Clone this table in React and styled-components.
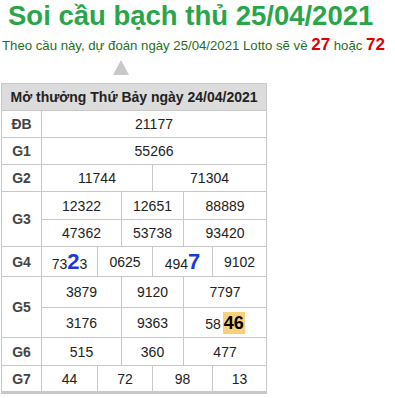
import React from "react";
import styled, { createGlobalStyle } from "styled-components";

const Global = createGlobalStyle`
  html, body { margin: 0; padding: 0; background: #fff; }
  body { font-family: Arial, "Liberation Sans", sans-serif; }
`;

const Page = styled.div`
  width: 395px;
  height: 398px;
  overflow: hidden;
`;

const Title = styled.h1`
  margin: 0;
  padding: 0 0 0 8px;
  font-size: 27.5px;
  line-height: 32px;
  font-weight: bold;
  color: #2aa54a;
  white-space: nowrap;
`;

const Sub = styled.p`
  margin: 3px 0 0 2px;
  font-size: 13.2px;
  line-height: 20px;
  color: #1f6f1f;
  white-space: nowrap;
`;

const Lotto = styled.b`
  color: #e00000;
  font-size: 17px;
`;

const Arrow = styled.div`
  width: 0;
  height: 0;
  margin: 4px 0 0 113px;
  border-left: 8.5px solid transparent;
  border-right: 8.5px solid transparent;
  border-bottom: 15px solid #c8c8c8;
`;

const Table = styled.table`
  margin: 8px 0 0 1px;
  width: 266px;
  border-collapse: collapse;
  table-layout: fixed;
  border: 1px solid #c8c8c8;
  border-bottom: 3px solid #c8c8c8;
  font-size: 14px;
  color: #222;
`;

const Head = styled.th`
  background: #dcdcdc;
  height: 26px;
  padding: 0;
  font-size: 14px;
  font-weight: bold;
  color: #222;
  text-align: center;
  border: 1px solid #c8c8c8;
  white-space: nowrap;
`;

const Label = styled.td`
  padding: 0;
  font-weight: bold;
  color: #444;
  text-align: center;
  border: 1px solid #c8c8c8;
  height: ${(p) => p.$h}px;
`;

const Cell = styled.td`
  padding: 0;
  text-align: center;
  border: 1px solid #c8c8c8;
  height: ${(p) => p.$h}px;
  white-space: nowrap;
`;

const Big = styled.b`
  color: #1a3ad8;
  font-size: 22px;
`;

const Hot = styled.b`
  display: inline-block;
  background: #fad17a;
  color: #000;
  font-size: 18px;
  line-height: 22px;
  padding: 0 1px;
  margin-left: 2px;
`;

const widths = [40, 56, 24, 31, 31, 29, 54];

export default function App() {
  return (
    <Page>
      <Global />
      <Title>Soi cầu bạch thủ 25/04/2021</Title>
      <Sub>
        Theo cầu này, dự đoán ngày 25/04/2021 Lotto sẽ về <Lotto>27</Lotto> hoặc <Lotto>72</Lotto>
      </Sub>
      <Arrow />
      <Table>
        <colgroup>
          {widths.map((w, i) => (
            <col key={i} style={{ width: w }} />
          ))}
        </colgroup>
        <thead>
          <tr>
            <Head colSpan={7}>Mở thưởng Thứ Bảy ngày 24/04/2021</Head>
          </tr>
        </thead>
        <tbody>
          <tr>
            <Label $h={26}>ĐB</Label>
            <Cell colSpan={6} $h={26}>21177</Cell>
          </tr>
          <tr>
            <Label $h={26}>G1</Label>
            <Cell colSpan={6} $h={26}>55266</Cell>
          </tr>
          <tr>
            <Label $h={26}>G2</Label>
            <Cell colSpan={3} $h={26}>11744</Cell>
            <Cell colSpan={3} $h={26}>71304</Cell>
          </tr>
          <tr>
            <Label rowSpan={2}>G3</Label>
            <Cell colSpan={2} $h={27}>12322</Cell>
            <Cell colSpan={2} $h={27}>12651</Cell>
            <Cell colSpan={2} $h={27}>88889</Cell>
          </tr>
          <tr>
            <Cell colSpan={2} $h={26}>47362</Cell>
            <Cell colSpan={2} $h={26}>53738</Cell>
            <Cell colSpan={2} $h={26}>93420</Cell>
          </tr>
          <tr>
            <Label $h={29}>G4</Label>
            <Cell $h={29}>73<Big>2</Big>3</Cell>
            <Cell colSpan={2} $h={29}>0625</Cell>
            <Cell colSpan={2} $h={29}>494<Big>7</Big></Cell>
            <Cell $h={29}>9102</Cell>
          </tr>
          <tr>
            <Label rowSpan={2}>G5</Label>
            <Cell colSpan={2} $h={30}>3879</Cell>
            <Cell colSpan={2} $h={30}>9120</Cell>
            <Cell colSpan={2} $h={30}>7797</Cell>
          </tr>
          <tr>
            <Cell colSpan={2} $h={29}>3176</Cell>
            <Cell colSpan={2} $h={29}>9363</Cell>
            <Cell colSpan={2} $h={29}>58<Hot>46</Hot></Cell>
          </tr>
          <tr>
            <Label $h={27}>G6</Label>
            <Cell colSpan={2} $h={27}>515</Cell>
            <Cell colSpan={2} $h={27}>360</Cell>
            <Cell colSpan={2} $h={27}>477</Cell>
          </tr>
          <tr>
            <Label $h={25}>G7</Label>
            <Cell $h={25}>44</Cell>
            <Cell colSpan={2} $h={25}>72</Cell>
            <Cell colSpan={2} $h={25}>98</Cell>
            <Cell $h={25}>13</Cell>
          </tr>
        </tbody>
      </Table>
    </Page>
  );
}
